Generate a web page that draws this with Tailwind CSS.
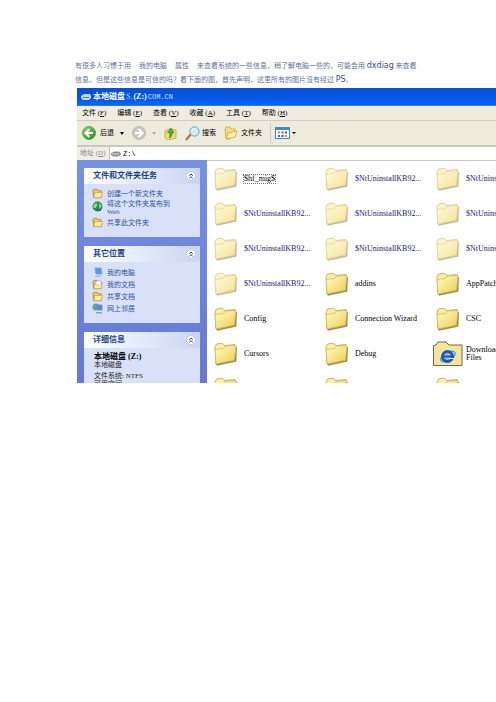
<!DOCTYPE html>
<html lang="zh-CN">
<head>
    <meta charset="UTF-8">
    <meta name="viewport" content="width=device-width, initial-scale=1.0">
    <title>本地磁盘 (Z:)</title>
    <script src="https://cdn.jsdelivr.net/npm/@tailwindcss/browser@4"></script>
</head>
<body class="bg-white overflow-x-hidden font-['Liberation_Serif','Noto_Sans_CJK_SC',serif] text-[7px] leading-[8px] text-black">

    <!-- Shared icons -->
    <svg class="absolute size-0">
        <defs>
            <linearGradient id="fold" x1="0" y1="0" x2="1" y2="1">
                <stop offset="0" stop-color="#fffbc4"/>
                <stop offset="1" stop-color="#f0cf4e"/>
            </linearGradient>
            <linearGradient id="green" x1="0" y1="0" x2="1" y2="1">
                <stop offset="0" stop-color="#8ad87c"/>
                <stop offset="1" stop-color="#1d8a22"/>
            </linearGradient>
            <symbol id="folder" viewBox="0 0 23 24">
                <path d="M2.500 22.500 21 18.700 22.300 5 22 19.300 3 23.300z" fill="#8d8250" stroke="#8d8250" stroke-width=".7"/>
                <path d="M1 5 2.500 2 8 1.200 11 3.500 21 2.500 21.500 5 20.500 18 2 22z" fill="#fbf0a0" stroke="#a99b45" stroke-width=".7"/>
                <path d="M1 7.500 9 6.500 12 4 22 3.500 20.500 18 2 22z" fill="url(#fold)" stroke="#c5a93e" stroke-width=".6"/>
            </symbol>
            <symbol id="small-folder" viewBox="0 0 12 12">
                <path d="M1 3 2 1.500h3.500L6.500 3H10v7.500H2z" fill="#f3c95a" stroke="#a97a22" stroke-width=".8"/>
                <path d="M3 5h8.500L10 10.500H2z" fill="#fff0a0" stroke="#b98c2c" stroke-width=".6"/>
            </symbol>
            <symbol id="chevrons" viewBox="0 0 10 10">
                <circle cx="5" cy="5" r="4.500" fill="#fff" stroke="#b4c0e0" stroke-width=".8"/>
                <path d="M3.200 4.700 5 3l1.800 1.700M3.200 7.400 5 5.700l1.800 1.700" fill="none" stroke="#223a80" stroke-width="1"/>
            </symbol>
        </defs>
    </svg>

    <main class="pt-[59px]">
        <p class="ml-[75px] mb-px text-[7px] leading-[14px] text-[#66709f] whitespace-nowrap">
            有很多人习惯于用<span class="mx-2">我的电脑</span><span class="mr-2">属性</span>来查看系统的一些信息，稍了解电脑一些的，可能会用 <span class="font-['DejaVu_Sans'] text-[8px] text-[#3b478f]">dxdiag</span> 来查看<br>
            信息。但是这些信息是可信的吗？看下面的图，首先声明，这里所有的图片没有经过 <span class="font-['DejaVu_Sans'] text-[8px] text-[#3b478f]">PS</span>。
        </p>

        <section class="ml-[77px] overflow-hidden">
            <!-- Title bar -->
            <header class="flex items-center h-[18px] pl-1 bg-linear-to-b from-[#0b50cf] via-[#0054e3] to-[#0566fb] text-white border-b border-[#3c78c8]">
                <svg class="w-[10px] h-[8px]" viewBox="0 0 10 8"><path d="M0 3 3 1h6l1 2v2L8 7H2L0 5z" fill="#c9d6e6"/><path d="M2 4h6v1H2z" fill="#5c7290"/></svg>
                <h1 class="ml-[2px] text-[8px] font-bold">本地磁盘<span class="mx-px font-normal text-[#c6dcff]">S.</span>(Z:)</h1>
                <span class="ml-px font-['Liberation_Mono'] text-[7px] text-[#d6e6ff]">COM.CN</span>
            </header>

            <!-- Menu -->
            <nav class="flex items-center gap-[11px] h-[15px] pl-[5px] bg-[#f0ece0] border-b border-[#cfccc0] whitespace-nowrap">
                <button>文件 (<u>F</u>)</button>
                <button>编辑 (<u>E</u>)</button>
                <button>查看 (<u>V</u>)</button>
                <button>收藏 (<u>A</u>)</button>
                <button>工具 (<u>T</u>)</button>
                <button>帮助 (<u>H</u>)</button>
            </nav>

            <!-- Toolbar -->
            <div class="flex items-center h-[26px] pl-[5px] bg-[#eeebdc] border-b-2 border-[#cbc8bd] whitespace-nowrap">
                <button class="flex items-center gap-1">
                    <svg class="size-[14px]" viewBox="0 0 14 14"><circle cx="7" cy="7" r="6.500" fill="url(#green)" stroke="#3b9440" stroke-width=".7"/><path d="M7.500 3 3.500 7l4 4M4 7h7" fill="none" stroke="#fff" stroke-width="2"/></svg>
                    后退
                </button>
                <svg class="ml-[6px] w-1 h-[3px]" viewBox="0 0 4 3"><path d="M0 0h4L2 3z"/></svg>
                <button class="ml-2" aria-label="前进">
                    <svg class="size-[14px]" viewBox="0 0 14 14"><circle cx="7" cy="7" r="6.500" fill="#c9c9c5" stroke="#aaa" stroke-width=".7"/><path d="m6.500 3 4 4-4 4M10 7H3" fill="none" stroke="#fff" stroke-width="2"/></svg>
                </button>
                <svg class="ml-[6px] w-1 h-[3px]" viewBox="0 0 4 3"><path d="M0 0h4L2 3z" fill="#aaa"/></svg>
                <button class="ml-2" aria-label="向上">
                    <svg class="size-[13px]" viewBox="0 0 13 13"><path d="M1 4 5 2l7 1v8l-8 2-3-2z" fill="#f4dc77" stroke="#b5983a" stroke-width=".7"/><path d="M5 11c3-1 3-3 3-5h2L7 1 3.500 5.500H5.500C6 8 6 9 5 11z" fill="#48b13a" stroke="#217c20" stroke-width=".6"/></svg>
                </button>
                <button class="ml-[8px] flex items-center gap-[2px]">
                    <svg class="size-[15px]" viewBox="0 0 15 15"><path d="m1 14 5-6" stroke="#b8705c" stroke-width="2.200"/><circle cx="9.500" cy="5.500" r="4.600" fill="#cdeefc" stroke="#6f9fc4"/><path d="M7 5c0-1.500 1-2.300 2.500-2.500" fill="none" stroke="#fff"/></svg>
                    搜索
                </button>
                <button class="ml-2 flex items-center gap-[3px]">
                    <svg class="size-[14px]" viewBox="0 0 14 14"><path d="M1 3 2 1h4l1 2h4v3L6 13H2z" fill="#f7df78" stroke="#c19d36" stroke-width=".7"/><path d="M4 7 13 5l-2 6-8 2z" fill="#fff5ab" stroke="#c19d36" stroke-width=".7"/></svg>
                    文件夹
                </button>
                <button class="ml-2 h-5 pl-1 flex items-center gap-[2px] border-l border-[#d0cdbf]" aria-label="查看">
                    <svg class="w-[15px] h-[12px]" viewBox="0 0 15 12"><path d="M.5.500h14v11H.5z" fill="#fff" stroke="#3f83bd"/><path d="M0 0h15v3H0z" fill="#3f8fc6"/><path d="M3 4.500h2v2H3zM10 8h2v2h-2z" fill="#d07a72"/><path d="M6.500 4.500h2v2h-2zM3 8h2v2H3z" fill="#4a65b8"/><path d="M10 4.500h2v2h-2zM6.500 8h2v2h-2z" fill="#35518c"/></svg>
                    <svg class="w-1 h-[2px]" viewBox="0 0 4 2"><path d="M0 0h4L2 2z"/></svg>
                </button>
            </div>

            <!-- Address bar -->
            <div class="flex h-[13px] items-stretch">
                <label for="address" class="w-[33px] pl-[3px] pt-[2px] bg-[#f0eee6] text-[#8c8a80] border-r border-[#c4c4bc]">地址 (<u>D</u>)</label>
                <svg class="ml-[1px] mt-1 w-[10px] h-[6px]" viewBox="0 0 10 6"><path d="M0 2.500 3 .5h5l2 2v1.500L7 5.500H2L0 4z" fill="#8f8f8f"/><path d="M1 2.500h7v1H1z" fill="#ddd"/></svg>
                <input id="address" value="Z:\" class="ml-[2px] flex-1 min-w-0 bg-white font-['Liberation_Mono'] text-[7px] outline-none">
            </div>

            <div class="flex h-[223px] overflow-hidden">
                <!-- Task pane -->
                <aside class="w-[130px] shrink-0 px-[7px] pt-2 flex flex-col gap-[9px] bg-linear-to-b from-[#7592e2] to-[#6678d3] text-[#2d5199]">
                    <section class="h-[69px] shrink-0 bg-[#d8e1f8]">
                        <h2 class="flex items-center justify-between h-4 pl-[9px] pr-1 rounded-t-xs bg-linear-to-r from-white to-[#c9d5f5] text-[8px] font-bold text-[#1d4588]">文件和文件夹任务
                            <button aria-label="收起"><svg class="block size-[10px]"><use href="#chevrons"/></svg></button>
                        </h2>
                        <ul class="pl-2 pt-[4px] flex flex-col gap-px">
                            <li class="flex gap-[4px] items-center"><svg class="size-[11px]"><use href="#small-folder"/></svg><a href="#">创建一个新文件夹</a></li>
                            <li class="flex gap-[4px] items-start"><svg class="size-[11px] mt-[1px]" viewBox="0 0 11 11"><circle cx="5.500" cy="5.500" r="5" fill="#288b45"/><path d="M2 3c3-2 4 0 3 2S3 8 1 6zM7 2l3 3-3 3z" fill="#83dc91"/><path d="M5 8h4v2H5z" fill="#2961ad"/></svg><a href="#">将这个文件夹发布到<br>Web</a></li>
                            <li class="flex gap-[4px] items-center"><svg class="size-[11px]"><use href="#small-folder"/></svg><a href="#">共享此文件夹</a></li>
                        </ul>
                    </section>
                    <section class="h-[77px] shrink-0 bg-[#d8e1f8]">
                        <h2 class="flex items-center justify-between h-4 pl-[9px] pr-1 rounded-t-xs bg-linear-to-r from-white to-[#c9d5f5] text-[8px] font-bold text-[#1d4588]">其它位置
                            <button aria-label="收起"><svg class="block size-[10px]"><use href="#chevrons"/></svg></button>
                        </h2>
                        <ul class="pl-2 pt-[5px] flex flex-col gap-[1px]">
                            <li class="flex gap-[4px] items-center"><svg class="size-[11px]" viewBox="0 0 11 11"><path d="M3 1h6l1 6H4z" fill="#4f9eea" stroke="#86a3cf"/><path d="M2 9.500 8 8l1 2H3z" fill="#b6b9c8"/></svg><a href="#">我的电脑</a></li>
                            <li class="flex gap-[4px] items-center"><svg class="size-[11px]"><use href="#small-folder"/><path d="M4 2h5v4H4z" fill="#fff" stroke="#999" stroke-width=".5"/></svg><a href="#">我的文档</a></li>
                            <li class="flex gap-[4px] items-center"><svg class="size-[11px]"><use href="#small-folder"/></svg><a href="#">共享文档</a></li>
                            <li class="flex gap-[4px] items-center"><svg class="size-[11px]" viewBox="0 0 11 11"><circle cx="4" cy="4" r="3.500" fill="#56a5a8"/><path d="M4 2h6v5H5z" fill="#438ddc" stroke="#7993c2"/><path d="M4 9h6v1.500H4z" fill="#949eba"/></svg><a href="#">网上邻居</a></li>
                        </ul>
                    </section>
                    <section class="h-[80px] shrink-0 bg-[#d8e1f8]">
                        <h2 class="flex items-center justify-between h-4 pl-[9px] pr-1 rounded-t-xs bg-linear-to-r from-white to-[#c9d5f5] text-[8px] font-bold text-[#1d4588]">详细信息
                            <button aria-label="收起"><svg class="block size-[10px]"><use href="#chevrons"/></svg></button>
                        </h2>
                        <div class="pl-[10px] pt-[5px] text-[#222]">
                            <p class="text-[8px] font-bold text-black">本地磁盘 (Z:)</p>
                            <p>本地磁盘</p>
                            <p class="mt-[3px]">文件系统: NTFS</p>
                            <p>可用空间</p>
                        </div>
                    </section>
                </aside>

                <!-- File list, filled in below -->
                <div class="flex-1 min-w-0 overflow-hidden border-t border-[#c6c8d0]">
                    <ul id="files" class="grid grid-cols-[repeat(3,111px)] auto-rows-[35px] pl-[7px] text-[8px]"></ul>
                </div>
            </div>
        </section>
    </main>

    <script>
        const files = [
            "$hf_mig$", "$NtUninstallKB92...", "$NtUninstallKB92...",
            "$NtUninstallKB92...", "$NtUninstallKB92...", "$NtUninstallKB92...",
            "$NtUninstallKB92...", "$NtUninstallKB92...", "$NtUninstallKB92...",
            "$NtUninstallKB92...", "addins", "AppPatch",
            "Config", "Connection Wizard", "CSC",
            "Cursors", "Debug", "Download Files",
            "", "", ""
        ];
        const folder = '<svg class="w-[23px] h-[24px] shrink-0"><use href="#folder"/></svg>';
        const faded = '<svg class="w-[23px] h-[24px] shrink-0 opacity-60"><use href="#folder"/></svg>';
        const ie = `<svg class="-ml-[3px] w-[30px] h-[26px] shrink-0" viewBox="0 0 30 26">
            <path d="M.5 4.500 3 4l2-3h8l3 3h13v20.500H.5z" fill="#f6e69b" stroke="#6f6845"/>
            <ellipse cx="15" cy="15.500" rx="8" ry="4" transform="rotate(-30 15 15.500)" fill="none" stroke="#4d9be6" stroke-width="1.500"/>
            <circle cx="14.500" cy="15.500" r="5" fill="#8fc0ee" stroke="#1c55bd" stroke-width="3"/>
            <path d="M11 15.500h8" stroke="#1c55bd" stroke-width="2"/><path d="M16 17.500h5" stroke="#f6e69b"/></svg>`;

        document.getElementById("files").innerHTML = files.map((name, i) => {
            if (name === "Download Files") {
                return `<li class="flex items-center gap-[3px]">${ie}<span>Download<br>Files</span></li>`;
            }
            const hidden = name.startsWith("$");
            const style = i === 0 ? "outline-1 outline-dotted outline-gray-500" : hidden ? "text-[#1b1b70]" : "text-black";
            return `<li class="flex items-center gap-[7px] whitespace-nowrap">${hidden ? faded : folder}<span class="${style}">${name}</span></li>`;
        }).join("");
    </script>
</body>
</html>
